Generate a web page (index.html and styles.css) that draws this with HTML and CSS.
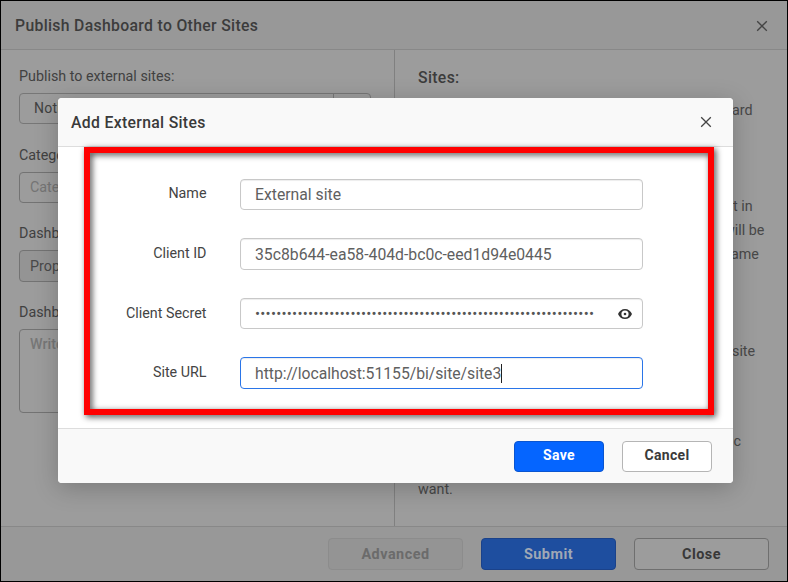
FILE: index.html
```html
<!DOCTYPE html>
<html lang="en">
<head>
<meta charset="utf-8">
<title>Publish Dashboard</title>
<link rel="stylesheet" href="styles.css">
</head>
<body>
<div class="page">
  <header class="page-head">
    <h1 class="title title-page">Publish Dashboard to Other Sites</h1>
    <svg class="close" viewBox="0 0 12 12"><path d="M1.2 1.2 10.8 10.8M10.8 1.2 1.2 10.8"/></svg>
  </header>
  <main class="columns">
    <section class="left">
      <div class="label">Publish to external sites:</div>
      <div class="select"><span>Nothing</span><i class="select-arrow"></i></div>
      <div class="label">Category</div>
      <div class="box box-category">Category</div>
      <div class="label">Dashboard</div>
      <div class="box box-name">Prop</div>
      <div class="label">Dashboard</div>
      <div class="box box-area">Write</div>
    </section>
    <section class="right">
      <h2 class="right-title">Sites:</h2>
      <p class="line line-1">ard</p>
      <p class="line line-2">t in</p>
      <p class="line line-3">will be</p>
      <p class="line line-4">ame</p>
      <p class="line line-5">site</p>
      <p class="line line-6">c</p>
      <p class="line line-7">want.</p>
    </section>
  </main>
  <footer class="page-foot">
    <div class="btn btn-disabled">Advanced</div>
    <div class="btn btn-submit">Submit</div>
    <div class="btn btn-close">Close</div>
  </footer>

  <div class="modal">
    <header class="modal-head">
      <h2 class="title title-modal">Add External Sites</h2>
      <svg class="close close-modal" viewBox="0 0 12 12"><path d="M1.2 1.2 10.8 10.8M10.8 1.2 1.2 10.8"/></svg>
    </header>
    <div class="modal-body">
      <div class="row"><span class="row-label">Name</span><div class="field"><span class="v-name">External site</span></div></div>
      <div class="row row-tall"><span class="row-label">Client ID</span><div class="field"><span class="v-id">35c8b644-ea58-404d-bc0c-eed1d94e0445</span></div></div>
      <div class="row"><span class="row-label row-label-secret">Client Secret</span><div class="field"><span class="dots">••••••••••••••••••••••••••••••••••••••••••••••••••••••••••••••••</span>
        <svg class="eye" viewBox="0 0 14 10"><path fill-rule="evenodd" d="M7 0C3.8 0 1.2 2 0 5c1.200 3 3.800 5 7 5s5.800-2 7-5C12.800 2 10.200 0 7 0Zm0 8.600a3.600 3.600 0 1 1 0-7.200 3.600 3.600 0 0 1 0 7.200Z"/><circle cx="7" cy="5" r="1.300"/></svg></div></div>
      <div class="row row-tall"><span class="row-label">Site URL</span><div class="field field-focus"><span class="v-url">http://localhost:51155/bi/site/site3</span><i class="caret"></i></div></div>
    </div>
    <footer class="modal-foot">
      <div class="btn btn-save">Save</div>
      <div class="btn btn-cancel">Cancel</div>
    </footer>
    <div class="highlight"></div>
  </div>
</div>
</body>
</html>
```
FILE: styles.css
```css
* { box-sizing: border-box; }
body { margin: 0; background: #000; font-family: Roboto, "Liberation Sans", sans-serif; font-size: 14.3px; color: #333; }
h1, h2, p { margin: 0; }

.page { position: relative; width: 788px; height: 582px; border: 1px solid #000; display: flex; flex-direction: column; background: #9c9c9c; overflow: hidden; }
.page-head { height: 49px; flex: none; border-bottom: 1px solid #888; background: #989898; display: flex; align-items: center; justify-content: space-between; padding: 1px 19px 0 14px; }
.title { font-size: 15.75px; font-weight: 500; letter-spacing: .33px; line-height: 20px; }
.title-page { color: #3c3c3c; }
.title-modal { color: #3a3a3a; padding-top: 2px; }
.close { width: 12px; height: 12px; fill: none; stroke: #444; stroke-width: 1.3; }

.columns { flex: 1; display: flex; min-height: 0; }
.left { width: 394px; border-right: 1px solid #808080; padding: 16px 23px 0 18px; }
.right { flex: 1; padding-left: 23px; }
.label { height: 20px; line-height: 20px; color: #414141; white-space: nowrap; }
.select { height: 31px; margin: 7px 0 21px; border: 1px solid #777; border-radius: 4px; display: flex; justify-content: space-between; line-height: 29px; padding-left: 14px; color: #414141; font-size: 14px; letter-spacing: .25px; }
.select-arrow { width: 37px; border-left: 1px solid #777; }
.box { border: 1px solid #737373; border-radius: 4px; padding-left: 10px; line-height: 29px; }
.box-category { height: 31px; margin: 7px 0 20px; color: #757575; }
.box-name { height: 32px; margin: 7px 0 20px; background: #949494; color: #494949; line-height: 31px; }
.box-area { height: 84px; margin-top: 7px; color: #777; font-weight: 500; }

.right-title { margin-top: 18px; height: 20px; line-height: 20px; font-size: 15.75px; font-weight: 500; letter-spacing: .35px; color: #3c3c3c; }
.line { height: 24px; line-height: 24px; color: #484848; white-space: nowrap; }
.line-1 { margin-top: 10px; padding-left: 314px; }
.line-2 { margin-top: 72px; padding-left: 315px; }
.line-3 { padding-left: 306px; }
.line-4 { padding-left: 313px; }
.line-5 { margin-top: 73px; padding-left: 314px; }
.line-6 { margin-top: 66px; padding-left: 315.5px; }
.line-7 { margin-top: 24px; }

.page-foot { height: 55px; flex: none; border-top: 1px solid #888; background: #989898; display: flex; justify-content: flex-end; gap: 18px; padding: 11px 18px 0 0; }
.btn { border: 1px solid; border-radius: 4px; text-align: center; font-weight: 700; letter-spacing: .5px; }
.page-foot .btn { width: 135px; height: 32px; line-height: 31px; font-size: 14.4px; }
.btn-disabled { background: #949494; border-color: #8c8c8c; color: #6b6b6b; }
.btn-submit { background: #1e4e9f; border-color: #1b428a; color: #a0a8b5; }
.btn-close { background: #9c9c9c; border-color: #6f6f6f; color: #383838; }

.modal { position: absolute; left: 57px; top: 97px; width: 675px; height: 385px; border-radius: 4px; background: #fff; box-shadow: 0 5px 24px rgba(0,0,0,.22); display: flex; flex-direction: column; }
.modal-head { height: 49px; flex: none; background: #f9f9f9; border-bottom: 1px solid #ddd; border-radius: 4px 4px 0 0; display: flex; align-items: center; justify-content: space-between; padding: 0 21.5px 0 13px; }
.modal-body { flex: 1; padding-top: 32px; display: flex; flex-direction: column; gap: 28px; }
.row { height: 31px; display: flex; }
.row-tall { height: 32px; }
.row-label { width: 148.5px; margin-right: 33.5px; text-align: right; line-height: 29px; color: #444; }
.row-label-secret, .row-tall .row-label { line-height: 30.5px; }
.field { width: 403px; border: 1px solid #c8c8c8; border-radius: 4px; box-shadow: inset 0 1px 1px rgba(0,0,0,.075); padding: 0 10px 0 14px; display: flex; align-items: center; font-size: 15.75px; color: #606060; white-space: nowrap; }
.field-focus { border-color: #2a75e8; padding-top: 1px; }
.v-url { letter-spacing: -.03px; }
.caret { width: 1px; height: 19px; background: #222; }
.dots { font-size: 15px; letter-spacing: .24px; color: #555; }
.eye { width: 14px; height: 10px; margin-left: auto; fill: #333; }
.modal-foot { height: 55px; flex: none; background: #f9f9f9; border-top: 1px solid #ddd; border-radius: 0 0 4px 4px; display: flex; justify-content: flex-end; gap: 18px; padding: 12px 21px 0 0; }
.modal-foot .btn { width: 90px; height: 31px; line-height: 27px; font-size: 14px; letter-spacing: .3px; }
.modal-foot .btn-save { background: #0565ff; border-color: #0a55d0; color: #fff; }
.btn-cancel { background: #fff; border-color: #b5b5b5; color: #3a3a3a; }
.highlight { position: absolute; left: 26px; top: 49px; width: 630px; height: 268px; border: 6px solid #f00; filter: drop-shadow(2px 2px 3px rgba(0,0,0,.7)); }
```
